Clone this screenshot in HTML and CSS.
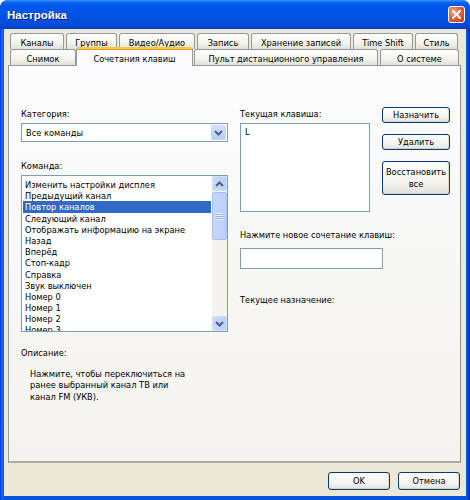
FILE: index.html
```html
<!DOCTYPE html>
<html lang="ru">
<head>
<meta charset="utf-8">
<title>Настройка</title>
<link rel="stylesheet" href="styles.css">
</head>
<body>
<div class="window">
  <div class="titlebar">
    <span class="title">Настройка</span>
    <span class="close"><svg width="9" height="9" viewBox="0 0 9 9"><path d="M1 1 L8 8 M8 1 L1 8" stroke="#fff" stroke-width="2" stroke-linecap="square"/></svg></span>
  </div>
  <div class="client">
    <div class="tabs">
      <div class="tabrow row1">
        <div class="tab w-kan">Каналы</div>
        <div class="tab w-grp">Группы</div>
        <div class="tab w-vid">Видео/Аудио</div>
        <div class="tab w-zap">Запись</div>
        <div class="tab w-hr">Хранение записей</div>
        <div class="tab w-ts">Time Shift</div>
        <div class="tab w-st">Стиль</div>
      </div>
      <div class="tabrow row2">
        <div class="tab w-sn">Снимок</div>
        <div class="tab active w-soc">Сочетания клавиш</div>
        <div class="tab w-pu">Пульт дистанционного управления</div>
        <div class="tab w-os">О системе</div>
      </div>
    </div>
    <div class="panel">
      <div class="col-left">
        <div class="label">Категория:</div>
        <div class="select">
          <span class="select-text">Все команды</span>
          <span class="drop"><svg width="9" height="6" viewBox="0 0 9 6"><path d="M1 1 L4.5 4.5 L8 1" fill="none" stroke="#4D6185" stroke-width="2"/></svg></span>
        </div>
        <div class="label lbl-cmd">Команда:</div>
        <div class="listbox">
          <div class="items">
            <div class="item">Изменить настройки дисплея</div>
            <div class="item">Предыдущий канал</div>
            <div class="item sel">Повтор каналов</div>
            <div class="item">Следующий канал</div>
            <div class="item">Отображать информацию на экране</div>
            <div class="item">Назад</div>
            <div class="item">Вперёд</div>
            <div class="item">Стоп-кадр</div>
            <div class="item">Справка</div>
            <div class="item">Звук выключен</div>
            <div class="item">Номер 0</div>
            <div class="item">Номер 1</div>
            <div class="item">Номер 2</div>
            <div class="item">Номер 3</div>
          </div>
          <div class="scrollbar">
            <span class="sb-btn"><svg width="9" height="6" viewBox="0 0 9 6"><path d="M1 5 L4.5 1.5 L8 5" fill="none" stroke="#4D6185" stroke-width="2"/></svg></span>
            <span class="sb-track">
              <span class="sb-thumb"><span class="grip"></span></span>
            </span>
            <span class="sb-btn"><svg width="9" height="6" viewBox="0 0 9 6"><path d="M1 1 L4.5 4.5 L8 1" fill="none" stroke="#4D6185" stroke-width="2"/></svg></span>
          </div>
        </div>
        <div class="label lbl-desc">Описание:</div>
        <div class="desc">Нажмите, чтобы переключиться на<br>ранее выбранный канал ТВ или<br>канал FM (УКВ).</div>
      </div>
      <div class="col-right">
        <div class="key-row">
          <div class="key-col">
            <div class="label">Текущая клавиша:</div>
            <div class="keybox">L</div>
          </div>
          <div class="btn-col">
            <button class="btn">Назначить</button>
            <button class="btn">Удалить</button>
            <button class="btn tall">Восстановить<br>все</button>
          </div>
        </div>
        <div class="label lbl-new">Нажмите новое сочетание клавиш:</div>
        <div class="input"></div>
        <div class="label lbl-cur">Текущее назначение:</div>
      </div>
    </div>
    <div class="footer">
      <button class="btn fbtn">OK</button>
      <button class="btn fbtn">Отмена</button>
    </div>
  </div>
</div>
</body>
</html>
```
FILE: styles.css
```css
* { box-sizing: border-box; }
html, body { margin: 0; padding: 0; background: #fff; }
body { font-family: "DejaVu Sans Condensed", "Liberation Sans", sans-serif; font-size: 9.2px; color: #000; }

.window {
  width: 470px; height: 500px;
  background: linear-gradient(90deg, #0831D9 0, #166AEE 2px, #0855DD 4px, #0855DD 466px, #0A4FD0 468px, #001EA0 470px);
  border-radius: 8px 8px 0 0;
  display: flex; flex-direction: column;
  overflow: hidden;
}
.titlebar {
  height: 29px; flex: none;
  background: linear-gradient(#3D95FF 0, #0A6AF3 2px, #0058EE 5px, #0055E8 12px, #0051E0 20px, #0048D6 26px, #003DC5 29px);
  display: flex; align-items: center; justify-content: space-between;
  padding: 0 5px 0 7px;
}
.title {
  color: #fff; font-family: "Liberation Sans", sans-serif; font-weight: bold; font-size: 11.5px;
  text-shadow: 1px 1px 0 #0A1E8C;
}
.close {
  width: 17px; height: 17px;
  border: 1px solid #fff; border-radius: 3px;
  background: radial-gradient(circle at 30% 30%, #F0A68C 0, #E0613F 45%, #C43B1C 100%);
  display: flex; align-items: center; justify-content: center;
}
.client {
  flex: 1; margin: 0 4px 4px 4px;
  background: #ECE9D8;
  display: flex; flex-direction: column;
}
.tabs { padding: 4px 0 0 6px; position: relative; z-index: 2; }
.tabrow { display: flex; height: 16px; align-items: flex-end; }
.row1 { gap: 2px; }
.tab {
  height: 16px;
  border: 1px solid #919B9C; border-bottom: none;
  border-radius: 3px 3px 0 0;
  background: linear-gradient(#FFFFFF, #F3F2EC 60%, #E3E1D6);
  display: flex; align-items: center; justify-content: center;
  white-space: nowrap; padding-top: 1px;
}
.w-kan { width: 54px; } .w-grp { width: 51px; } .w-vid { width: 76px; }
.w-zap { width: 52px; } .w-hr { width: 100px; } .w-ts { width: 60px; } .w-st { width: 43px; }
.w-sn { width: 66px; } .w-soc { width: 117px; } .w-pu { width: 184px; margin-left: 1px; } .w-os { width: 79px; margin-left: 2px; }
.tab.active {
  height: 19px; margin-bottom: -1px;
  background: #FCFCFE;
  border-top: 2px solid #FFC83C;
  box-shadow: inset 0 1px 0 #E69A2B;
  position: relative; z-index: 3;
}
.panel {
  margin-left: 4px; width: 453px; height: 398px; flex: none;
  border: 1px solid #919B9C; border-right-color: #8A9091; border-bottom: 2px solid #A9ACA5;
  background: linear-gradient(#FCFCFE, #F4F3EE);
  display: flex; padding: 41px 0 0 12px;
  position: relative; z-index: 1;
}
.label { height: 13px; line-height: 13px; white-space: nowrap; }
.col-left { width: 207px; display: flex; flex-direction: column; }
.select {
  margin-top: 3px; height: 19px;
  border: 1px solid #7F9DB9; background: #fff;
  display: flex; align-items: center; justify-content: space-between;
  padding: 0 1px 0 4px;
}
.drop {
  width: 15px; height: 15px; border-radius: 2px;
  background: linear-gradient(#D6E2FC, #B6CCF9);
  border: 1px solid #C3D3FD;
  display: flex; align-items: center; justify-content: center;
}
.lbl-cmd { margin-top: 17px; }
.listbox {
  margin-top: 3px; height: 157px;
  border: 1px solid #7F9DB9; background: #fff;
  display: flex; overflow: hidden;
}
.items { flex: 1; padding: 3px 1px 0 1px; overflow: hidden; }
.item { height: 11.2px; line-height: 11.2px; padding-left: 2px; white-space: nowrap; }
.item.sel { background: #316AC5; color: #fff; }
.scrollbar { width: 15px; display: flex; flex-direction: column; background: #F4F3EE; }
.sb-btn {
  height: 15px; flex: none; border-radius: 2px;
  background: linear-gradient(90deg, #CADAFB, #BAD0FB);
  border: 1px solid #D0DEFC;
  display: flex; align-items: center; justify-content: center;
}
.sb-track { flex: 1; padding: 1px 0; display: flex; flex-direction: column; }
.sb-thumb {
  height: 48px; border-radius: 2px;
  background: linear-gradient(90deg, #C8D7FA, #B9CFFA);
  border: 1px solid #A8C0F4;
  display: flex; align-items: center; justify-content: center;
}
.grip { width: 7px; height: 7px; background: repeating-linear-gradient(#EEF4FE 0, #EEF4FE 1px, #8CB0F8 1px, #8CB0F8 2px); }
.lbl-desc { margin-top: 14px; }
.desc { margin-top: 9px; padding-left: 9px; line-height: 11.3px; white-space: nowrap; }

.col-right { margin-left: 12px; display: flex; flex-direction: column; }
.key-row { display: flex; }
.key-col { width: 130px; display: flex; flex-direction: column; }
.keybox {
  margin-top: 3px; height: 89px;
  border: 1px solid #7F9DB9; background: #fff;
  padding: 2px 4px; line-height: 11px;
}
.btn-col { margin-left: 12px; display: flex; flex-direction: column; gap: 11px; }
.btn {
  font-family: inherit; font-size: 9.2px; color: #000;
  width: 68px; height: 16px; padding: 0;
  border: 1px solid #003C74; border-radius: 3px;
  background: linear-gradient(#FFFFFF, #F5F4EF 60%, #E3E2DA);
  box-shadow: inset 0 -1px 0 #D6D0C5, inset -1px 0 0 #E0DCD2;
  line-height: 12px;
}
.btn.tall { height: 34px; }
.lbl-new { margin-top: 16px; }
.input { margin-top: 7px; width: 143px; height: 21px; border: 1px solid #7F9DB9; background: #fff; }
.lbl-cur { margin-top: 24px; }

.footer { display: flex; justify-content: flex-end; gap: 8px; padding: 9px 6px 0 0; }
.fbtn { width: 62px; height: 18px; }
```
